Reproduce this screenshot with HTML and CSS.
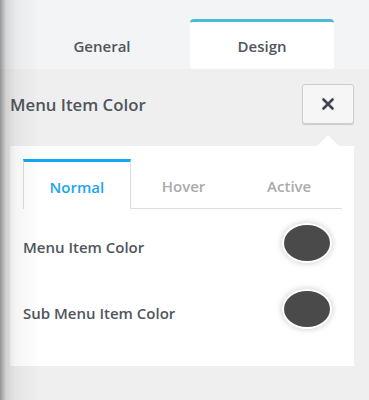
FILE: index.html
```html
<!doctype html>
<html lang="en">
  <head>
    <meta charset="UTF-8" />
    <title>Menu Item Color</title>
    <link rel="stylesheet" href="styles.css">
  </head>
  <body>
    <div class="edge-shadow"></div>
    <div class="top-tabs">
      <div class="top-tab">General</div>
      <div class="top-tab active">Design</div>
    </div>
    <div class="header">
      <h1>Menu Item Color</h1>
      <button class="close-btn" aria-label="Close">
        <svg width="12" height="12" viewBox="0 0 12 12">
          <path d="M1.5 1.5 L10.5 10.5 M10.5 1.5 L1.5 10.5" stroke="#3d4450" stroke-width="2.6" stroke-linecap="round" />
        </svg>
      </button>
    </div>
    <div class="panel">
      <div class="arrow"></div>
      <div class="state-tabs">
        <div class="state-tab active">Normal</div>
        <div class="state-tab">Hover</div>
        <div class="state-tab">Active</div>
      </div>
      <div class="color-row">
        <label>Menu Item Color</label>
        <span class="swatch"></span>
      </div>
      <div class="color-row">
        <label>Sub Menu Item Color</label>
        <span class="swatch"></span>
      </div>
    </div>
  </body>
</html>
```

FILE: styles.css
```css
body {
  margin: 0;
  background-color: #efefef;
  font-family: "Open Sans", "Liberation Sans", sans-serif;
  color: #50555c;
  height: 400px;
  overflow: hidden;
}

.edge-shadow {
  position: fixed;
  left: 0;
  top: 0;
  bottom: 0;
  width: 40px;
  background: linear-gradient(to right, rgba(0, 0, 0, 0.38) 0, rgba(0, 0, 0, 0.12) 6px, rgba(0, 0, 0, 0.04) 16px, rgba(0, 0, 0, 0) 40px);
  pointer-events: none;
  z-index: 5;
}

.top-tabs {
  display: flex;
  gap: 16px;
  height: 50px;
  padding: 19px 0 0 30px;
  background-color: #f3f4f6;
}

.top-tab {
  width: 144px;
  display: flex;
  align-items: center;
  justify-content: center;
  font-size: 15px;
  font-weight: 600;
  border-top: 3px solid transparent;
  box-sizing: border-box;
}

.top-tab.active {
  background-color: #fff;
  border-top-color: #4bbad9;
  border-radius: 4px 4px 3px 3px;
}

.header {
  display: flex;
  align-items: center;
  justify-content: space-between;
  padding: 15px 15px 0 10px;
}

.header h1 {
  margin: 0;
  font-size: 16.8px;
  font-weight: 600;
  color: #50555c;
}

.close-btn {
  width: 52px;
  height: 40px;
  display: flex;
  align-items: center;
  justify-content: center;
  background-color: #f6f6f6;
  border: 1px solid #cfcfcf;
  border-radius: 3px;
  box-shadow: 0 1px 1px rgba(0, 0, 0, 0.15);
  cursor: pointer;
  padding: 0;
}

.panel {
  position: relative;
  margin: 22px 15px 0 10px;
  padding: 13px 12px 25px 13px;
  background-color: #fff;
}

.arrow {
  position: absolute;
  top: -11px;
  right: 15px;
  width: 0;
  height: 0;
  border-left: 11px solid transparent;
  border-right: 11px solid transparent;
  border-bottom: 11px solid #fff;
}

.state-tabs {
  display: flex;
  border-bottom: 1px solid #dedede;
}

.state-tab {
  flex: 1;
  height: 48px;
  display: flex;
  align-items: center;
  justify-content: center;
  font-size: 15px;
  font-weight: 600;
  color: #aaa;
  box-sizing: border-box;
  padding-top: 5px;
}

.state-tab.active {
  color: #1aa5f2;
  border-top: 3px solid #12a8f5;
  border-left: 1px solid #dedede;
  border-right: 1px solid #dedede;
  padding-top: 2px;
  margin-bottom: -1px;
  height: 50px;
  background-color: #fff;
}

.color-row {
  display: flex;
  align-items: center;
  justify-content: space-between;
  height: 65px;
  padding: 1px 10px 0 0;
}

.color-row label {
  font-size: 15px;
  font-weight: 600;
  color: #50555c;
  padding-top: 8px;
}

.swatch {
  width: 46px;
  height: 36px;
  border-radius: 50%;
  background-color: #4a4a4a;
  border: 2px solid #fff;
  box-shadow: 0 0 6px rgba(0, 0, 0, 0.22);
}
```
